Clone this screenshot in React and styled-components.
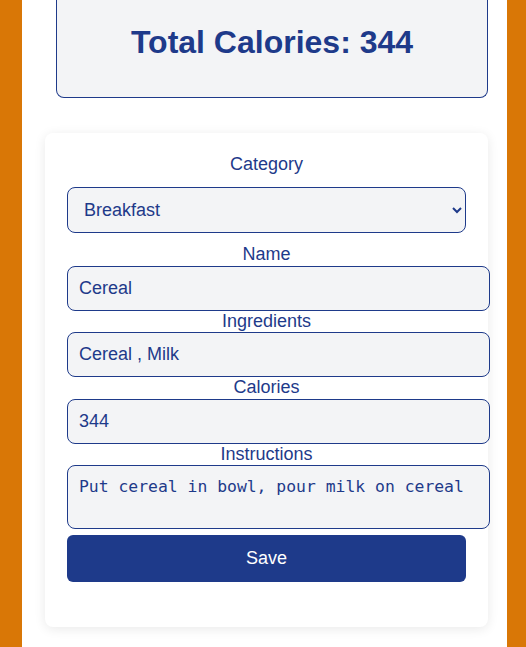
import styled, {createGlobalStyle} from 'styled-components';

const GlobalStyle = createGlobalStyle`
  body {
    margin: 0;
    background: #d97706;
    font-family: "Liberation Sans", Arial, sans-serif;
    color: #1e3a8a;
  }
`;

const Column = styled.main`
  margin: 0 19px 0 22px;
  min-height: 100vh;
  background: #ffffff;
  padding: 0 19px 20px 23px;
  box-sizing: border-box;
  display: flex;
  flex-direction: column;
`;

const TotalBox = styled.div`
  margin-left: 11px;
  background: #f3f4f6;
  border: 1px solid #1e3a8a;
  border-top: none;
  border-radius: 0 0 8px 8px;
  padding: 24px 0 37px;
  text-align: center;
`;

const TotalTitle = styled.h1`
  margin: 0;
  font-size: 32px;
  line-height: 36px;
  font-weight: 700;
`;

const Card = styled.form`
  margin-top: 35px;
  background: #ffffff;
  border-radius: 8px;
  box-shadow: 0 2px 12px rgba(0, 0, 0, 0.09);
  padding: 21px 22px 45px;
  display: flex;
  flex-direction: column;
  align-items: flex-start;
`;

const Label = styled.label`
  display: block;
  align-self: stretch;
  text-align: center;
  font-size: 18px;
  line-height: 21.5px;
`;

const Select = styled.select`
  margin: 11.5px 0 11px;
  width: 100%;
  height: 46px;
  box-sizing: border-box;
  padding: 0 10px 0 12px;
  font-family: "Liberation Sans", Arial, sans-serif;
  font-size: 18px;
  color: #1e3a8a;
  background: #f3f4f6;
  border: 1px solid #1e3a8a;
  border-radius: 8px;
`;

const Input = styled.input`
  width: 423px;
  height: 45px;
  box-sizing: border-box;
  padding: 0 11px;
  font-family: "Liberation Sans", Arial, sans-serif;
  font-size: 18px;
  color: #1e3a8a;
  background: #f3f4f6;
  border: 1px solid #1e3a8a;
  border-radius: 8px;
`;

const TextArea = styled.textarea`
  display: block;
  width: 423px;
  height: 64px;
  box-sizing: border-box;
  padding: 11px 11px;
  resize: none;
  font-family: "DejaVu Sans Mono", monospace;
  font-size: 16.4px;
  line-height: 20px;
  color: #1e3a8a;
  background: #f3f4f6;
  border: 1px solid #1e3a8a;
  border-radius: 8px;
`;

const SaveButton = styled.button`
  margin-top: 5.5px;
  width: 100%;
  height: 47px;
  border: none;
  border-radius: 6px;
  background: #1e3a8a;
  color: #ffffff;
  font-family: "Liberation Sans", Arial, sans-serif;
  font-size: 18px;
`;

export default function App() {
    return (
        <>
            <GlobalStyle/>
            <Column>
                <TotalBox>
                    <TotalTitle>Total Calories: 344</TotalTitle>
                </TotalBox>
                <Card onSubmit={(e) => e.preventDefault()}>
                    <Label htmlFor="category">Category</Label>
                    <Select id="category" defaultValue="Breakfast">
                        <option>Breakfast</option>
                        <option>Lunch</option>
                        <option>Dinner</option>
                        <option>Snack</option>
                    </Select>
                    <Label htmlFor="name">Name</Label>
                    <Input id="name" defaultValue="Cereal"/>
                    <Label htmlFor="ingredients">Ingredients</Label>
                    <Input id="ingredients" defaultValue="Cereal , Milk"/>
                    <Label htmlFor="calories">Calories</Label>
                    <Input id="calories" defaultValue="344"/>
                    <Label htmlFor="instructions">Instructions</Label>
                    <TextArea
                        id="instructions"
                        defaultValue="Put cereal in bowl, pour milk on cereal"
                    />
                    <SaveButton type="submit">Save</SaveButton>
                </Card>
            </Column>
        </>
    );
}
